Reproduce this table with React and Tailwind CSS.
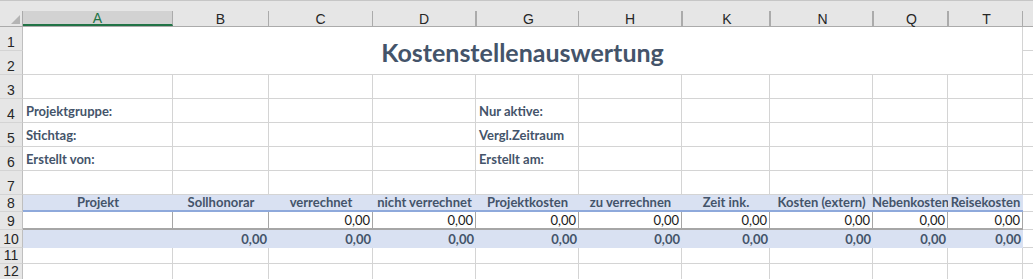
import React from 'react';

// column layout of the sheet: letter, width class
const columns = [
    { key: 'A', w: 'w-[150px]' },
    { key: 'B', w: 'w-[96px]' },
    { key: 'C', w: 'w-[104px]' },
    { key: 'D', w: 'w-[103px]' },
    { key: 'G', w: 'w-[103px]' },
    { key: 'H', w: 'w-[103px]' },
    { key: 'K', w: 'w-[88px]' },
    { key: 'N', w: 'w-[103px]' },
    { key: 'Q', w: 'w-[75px]' },
    { key: 'T', w: 'w-[75px]' },
];

// columns that have hidden ones before them (double separator in header)
const hiddenBefore = ['G', 'K', 'N', 'Q', 'T'];

const headers = [
    'Projekt', 'Sollhonorar', 'verrechnet', 'nicht verrechnet', 'Projektkosten',
    'zu verrechnen', 'Zeit ink.', 'Kosten (extern)', 'Nebenkosten', 'Reisekosten',
];

const cellFont = "font-['Lato','Open_Sans',sans-serif] text-[13px]";

const RowHead = ({ n, h }) => (
    <div className={`w-[23px] ${h} shrink-0 bg-[#e6e6e6] border-r border-r-[#bfbfbf] border-b border-b-[#d4d4d4] flex items-end justify-center pb-[1px] text-[14px] leading-none text-[#262626] font-['Liberation_Sans',sans-serif]`}>
        {n}
    </div>
);

const Tail = ({ h }) => (
    <div className={`w-[10px] ${h} shrink-0 border-b border-[#d4d4d4]`} />
);

const PlainRow = ({ n, h = 'h-[24px]', labels = {} }) => (
    <div className="flex">
        <RowHead n={n} h={h} />
        {columns.map(c => (
            <div key={c.key} className={`${c.w} ${h} shrink-0 border-r border-b border-[#d4d4d4] flex items-end pl-[3px] pb-[4px] ${cellFont} font-bold leading-none text-[#44546a] whitespace-nowrap`}>
                {labels[c.key]}
            </div>
        ))}
        <Tail h={h} />
    </div>
);

const App = () => {
    return (
        <div className="w-[1033px] h-[279px] overflow-hidden bg-white select-none">
            {/* strip above the column letters */}
            <div className="h-[11px] bg-[#e6e6e6] border-t border-[#c6c6c6]" />

            {/* column letters */}
            <div className="flex h-[16px] bg-[#e6e6e6] border-b border-[#ababab]">
                <div className="w-[23px] shrink-0 relative border-r border-[#ababab]">
                    <svg className="absolute right-[2px] bottom-[2px]" width="9" height="9" viewBox="0 0 9 9">
                        <polygon points="9,0 9,9 0,9" fill="#b4b4b4" />
                    </svg>
                </div>
                {columns.map(c => (
                    <div
                        key={c.key}
                        className={`${c.w} shrink-0 flex items-center justify-center pt-[1px] text-[14px] leading-none font-['Liberation_Sans',sans-serif] ${c.key === 'A' ? 'bg-[#d2d2d2] text-[#217346] border-b-2 border-[#217346] border-r border-r-[#ababab]' : 'text-[#262626] border-r border-[#ababab]'} ${hiddenBefore.includes(c.key) ? 'border-l border-l-[#ababab] pl-[2px]' : ''}`}
                    >
                        {c.key}
                    </div>
                ))}
                <div className="w-[10px] shrink-0" />
            </div>

            {/* rows 1-2: merged title */}
            <div className="flex">
                <div className="flex flex-col">
                    <RowHead n="1" h="h-[24px]" />
                    <RowHead n="2" h="h-[24px]" />
                </div>
                <div className="w-[1000px] h-[48px] shrink-0 border-r border-b border-[#d4d4d4] flex items-center justify-center pt-[4px] font-['Lato','Open_Sans',sans-serif] font-bold text-[25px] leading-none text-[#44546a]">
                    Kostenstellenauswertung
                </div>
                <div className="flex flex-col">
                    <Tail h="h-[24px]" />
                    <Tail h="h-[24px]" />
                </div>
            </div>

            <PlainRow n="3" />
            <PlainRow n="4" labels={{ A: 'Projektgruppe:', G: 'Nur aktive:' }} />
            <PlainRow n="5" labels={{ A: 'Stichtag:', G: 'Vergl.Zeitraum' }} />
            <PlainRow n="6" labels={{ A: 'Erstellt von:', G: 'Erstellt am:' }} />
            <PlainRow n="7" />

            {/* row 8: table header */}
            <div className="flex">
                <RowHead n="8" h="h-[17px]" />
                {columns.map((c, i) => (
                    <div key={c.key} className={`${c.w} h-[17px] shrink-0 bg-[#d9e1f2] border-b-2 border-[#8ea9db] flex items-end justify-center pb-[1px] ${cellFont} font-bold leading-none text-[#44546a] whitespace-nowrap`}>
                        {headers[i]}
                    </div>
                ))}
                <Tail h="h-[17px]" />
            </div>

            {/* row 9: entry row */}
            <div className="flex">
                <RowHead n="9" h="h-[18px]" />
                {columns.map((c, i) => (
                    <div key={c.key} className={`${c.w} h-[18px] shrink-0 border-r border-[#a6a6a6] border-b-2 border-b-[#a6a6a6] flex items-end justify-end pr-[2px] pb-[1px] ${cellFont} leading-none text-[#1a1a1a]`}>
                        {i >= 2 ? '0,00' : ''}
                    </div>
                ))}
                <Tail h="h-[18px]" />
            </div>

            {/* row 10: totals */}
            <div className="flex">
                <RowHead n="10" h="h-[18px]" />
                {columns.map((c, i) => (
                    <div key={c.key} className={`${c.w} h-[18px] shrink-0 bg-[#d9e1f2] flex items-end justify-end pr-[2px] pb-[2px] ${cellFont} font-bold leading-none text-[#44546a]`}>
                        {i >= 1 ? '0,00' : ''}
                    </div>
                ))}
                <Tail h="h-[18px]" />
            </div>

            <PlainRow n="11" h="h-[16px]" />
            <PlainRow n="12" h="h-[16px]" />
        </div>
    );
};

export default App;
